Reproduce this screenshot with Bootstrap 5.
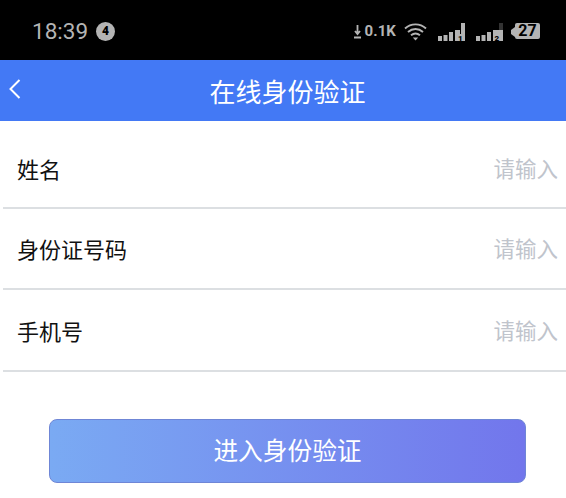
<!DOCTYPE html>
<html lang="zh"><head><meta charset="utf-8">
<link href="https://cdn.jsdelivr.net/npm/bootstrap@5.3.0/dist/css/bootstrap.min.css" rel="stylesheet">
<style>
html,body{margin:0;background:#fff;overflow:hidden;font-family:"Noto Sans CJK SC","Liberation Sans",sans-serif}
.sbar{height:60px;background:#000;color:#b4b4b4;padding:3px 26px 0 32px}
.clock{font-family:Roboto,sans-serif;font-size:22.5px;line-height:1}
.notif{width:19px;height:19px;border-radius:50%;background:#b4b4b4;color:#000;font:900 12px/19px Roboto,sans-serif;text-align:center;margin-left:8px}
.speed{font:700 15px/1 Roboto,sans-serif;letter-spacing:.1px;margin-left:4px}
.batt{background:#b4b4b4;color:#000;font:700 16px/16px Roboto,sans-serif;width:25px;height:16px;text-align:center;border-radius:2px;margin-top:-1px}
.hdr{height:61px;background:#4379f5;color:#fff;font-size:26px;padding-left:9px}
.back{left:9px;top:19px}
.rowline{height:81px;margin-left:3px;border-bottom:2px solid #dcdfe2;padding:0 8px 0 14px;font-size:22px;color:#111}
.rowline:nth-child(1){height:88px;padding-top:8px}
.rowline:nth-child(3){height:82px}
.hint{font-size:21.5px;color:#c0c4cc}
.go{width:477px;height:64px;margin:47px 0 0 49px;padding-top:3px;border:1px solid #6f86d6;border-radius:8px;background:linear-gradient(90deg,#7aaaf3,#7276ec);color:#fff;font-size:24.700px}
.go:hover{color:#fff}
</style></head><body>
<div class="sbar d-flex align-items-center">
 <span class="clock">18:39</span><span class="notif">4</span>
 <div class="ms-auto d-flex align-items-center">
  <svg width="7" height="15" viewBox="0 0 7 15"><path d="M3.500 1v8.500M1 7l2.500 3L6 7M0 13.500h7" stroke="#b4b4b4" stroke-width="1.800" fill="none"/></svg>
  <span class="speed">0.1K</span>
  <svg width="23" height="18" viewBox="0 0 23 18" style="margin-left:8px"><g fill="none" stroke="#b4b4b4" stroke-width="1.900"><path d="M1 5.500c6-5.500 15-5.500 21 0"/><path d="M4 9c4.500-4 10.500-4 15 0"/><path d="M7 12.300c2.800-2.300 6.200-2.300 9 0"/></g><path d="M8.800 14.500h5.400l-2.700 3z" fill="#b4b4b4"/></svg>
  <svg width="27" height="18" viewBox="0 0 27 18" style="margin-left:11px"><g fill="#b4b4b4"><rect x="0" y="13" width="4" height="5"/><rect x="5.500" y="12" width="4" height="6"/><rect x="11" y="9" width="4" height="9"/><rect x="17" y="7" width="5" height="11"/><rect x="23" y="0" width="4" height="18"/><rect x="20" y="11" width="5" height="7"/></g><text x="20" y="17.500" font-size="8" font-weight="900" fill="#000" font-family="Roboto">1</text></svg>
  <svg width="27" height="18" viewBox="0 0 27 18" style="margin-left:11px"><g fill="#b4b4b4"><rect x="0" y="13" width="4" height="5"/><rect x="5.500" y="12" width="4" height="6"/><rect x="11" y="9" width="4" height="9"/><rect x="17" y="7" width="10" height="11"/></g><rect x="23" y="0" width="4" height="7" fill="#333"/><text x="18.500" y="17.500" font-size="8" font-weight="900" fill="#000" font-family="Roboto">2</text></svg>
  <svg width="4" height="10" viewBox="0 0 4 10" style="margin-left:8px"><path d="M4 0v10L0 7V3z" fill="#b4b4b4"/></svg>
  <span class="batt">27</span>
 </div>
</div>
<div class="hdr position-relative d-flex align-items-center justify-content-center">
 <svg class="back position-absolute" width="12" height="20" viewBox="0 0 12 20"><path d="M10.500 1 1.500 10l9 9" fill="none" stroke="#fff" stroke-width="2"/></svg>
 <span>在线身份验证</span>
</div>
<div>
 <div class="rowline d-flex align-items-center justify-content-between"><span>姓名</span><span class="hint">请输入</span></div>
 <div class="rowline d-flex align-items-center justify-content-between"><span>身份证号码</span><span class="hint">请输入</span></div>
 <div class="rowline d-flex align-items-center justify-content-between"><span>手机号</span><span class="hint">请输入</span></div>
</div>
<button class="btn go d-flex align-items-center justify-content-center">进入身份验证</button>
</body></html>
